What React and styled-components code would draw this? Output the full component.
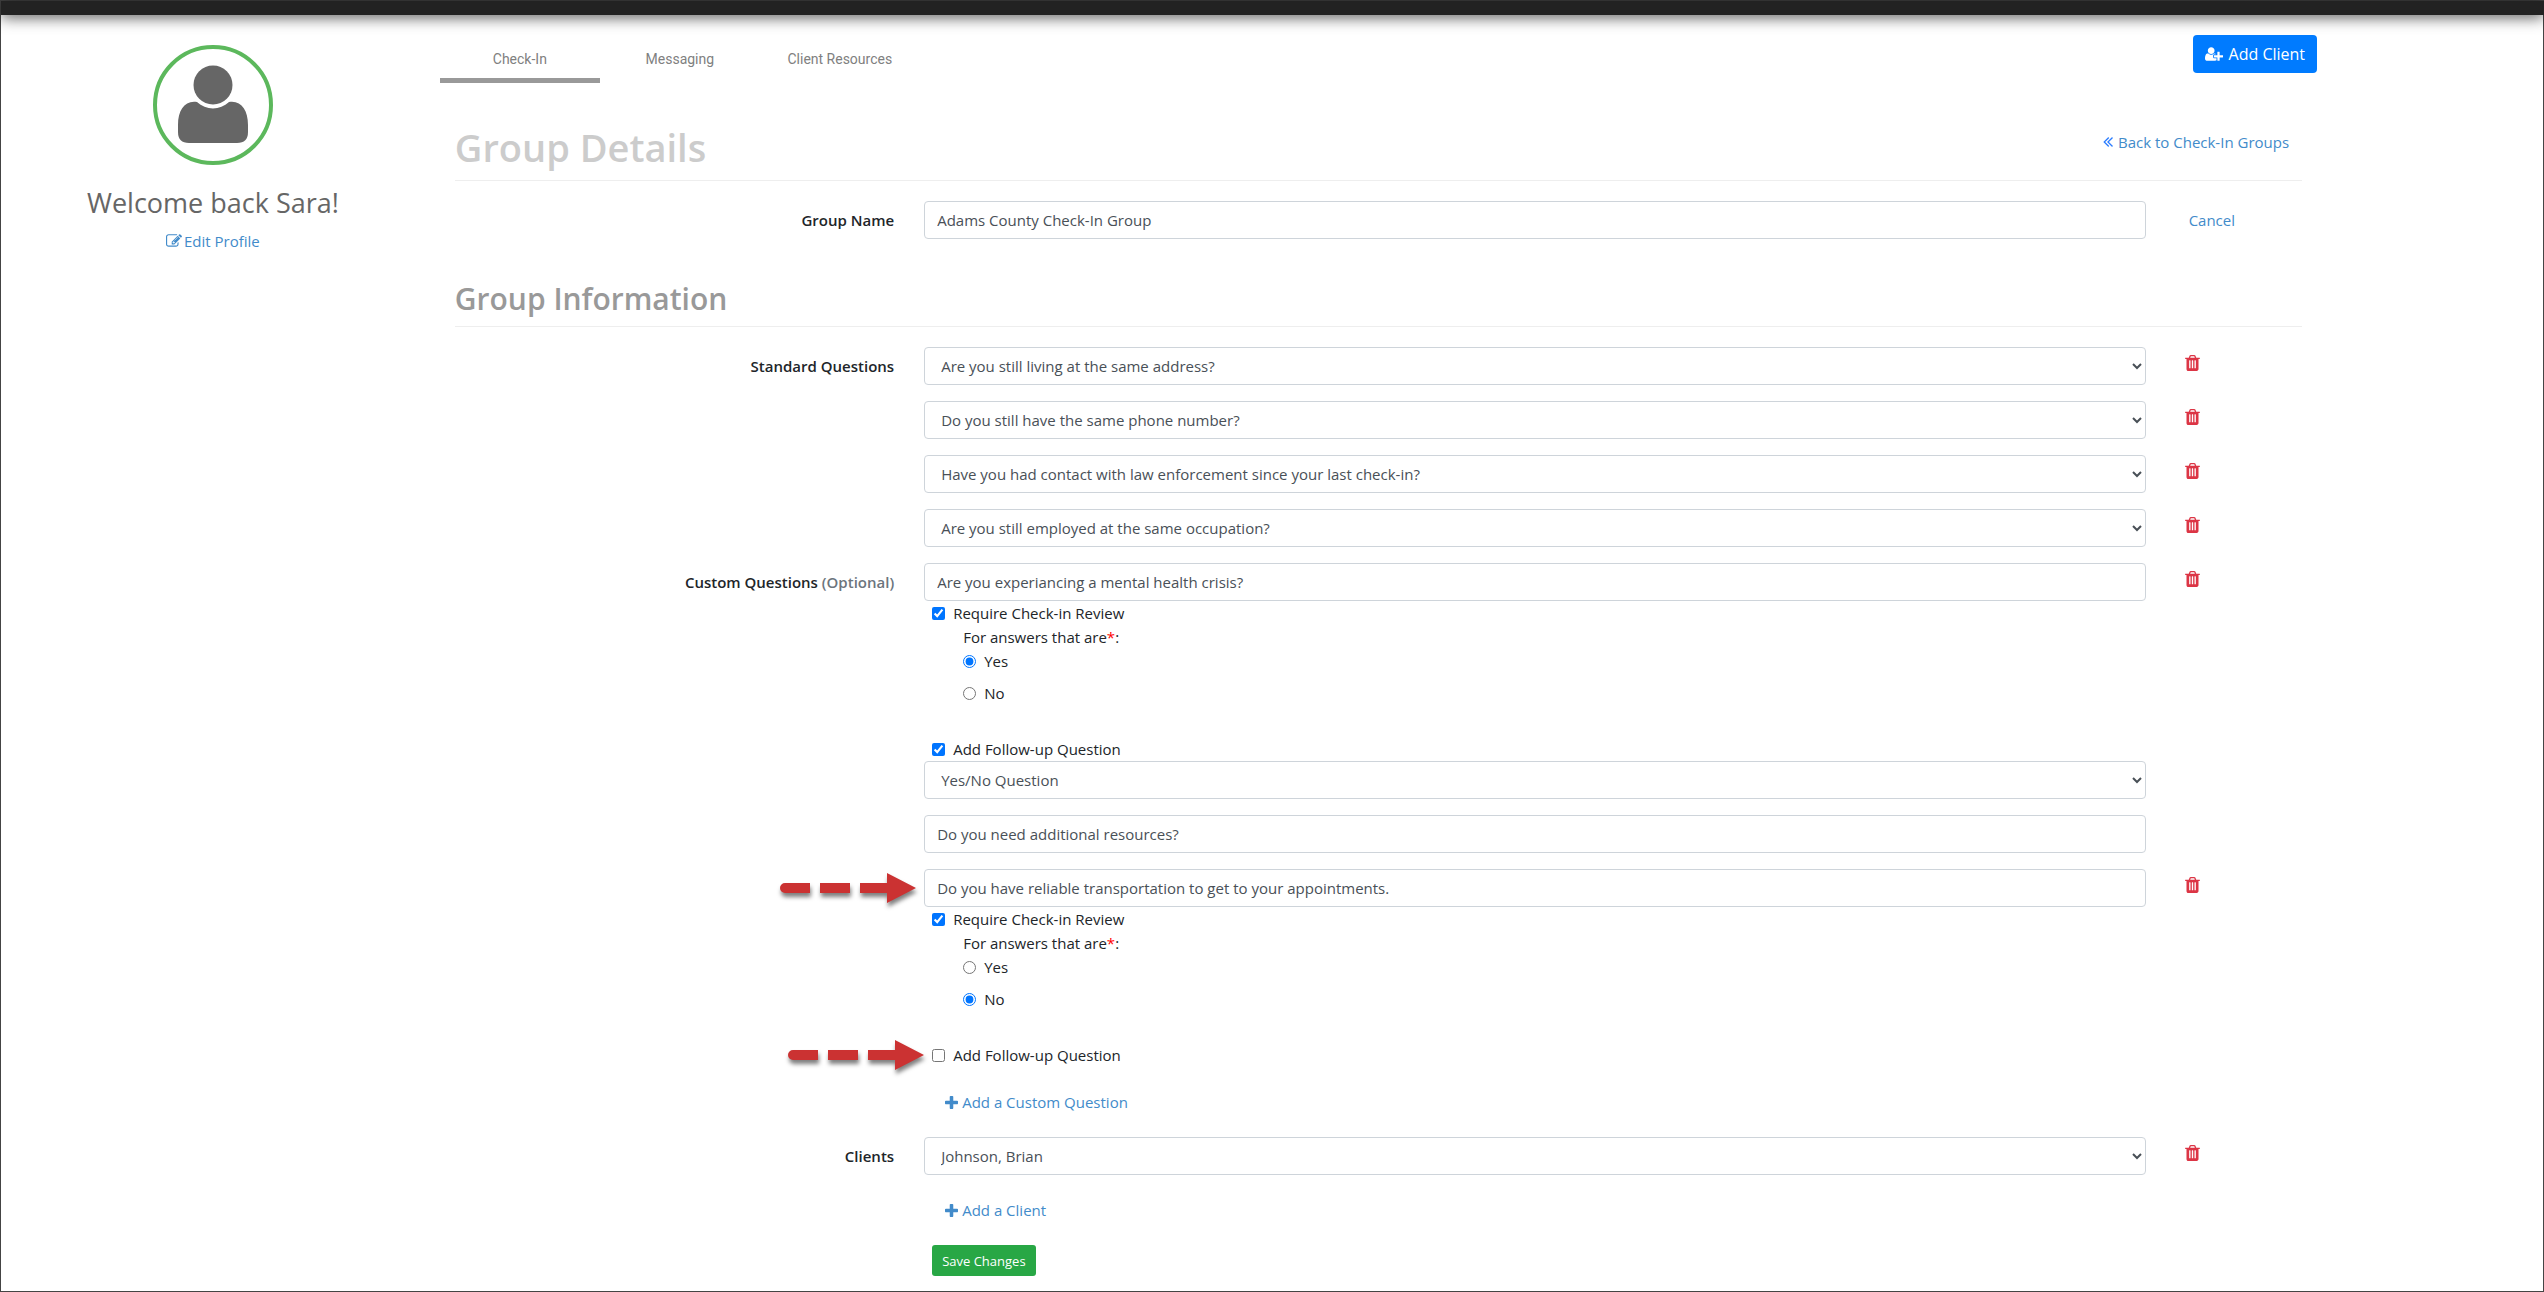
import React from 'react';
import styled, { createGlobalStyle } from 'styled-components';

const standardQuestions = [
  'Are you still living at the same address?',
  'Do you still have the same phone number?',
  'Have you had contact with law enforcement since your last check-in?',
  'Are you still employed at the same occupation?',
];

const customQuestions = [
  {
    id: 'crisis',
    text: 'Are you experiancing a mental health crisis?',
    reviewAnswer: 'Yes',
    followUp: 'Do you need additional resources?',
  },
  {
    id: 'transport',
    text: 'Do you have reliable transportation to get to your appointments.',
    reviewAnswer: 'No',
    marked: true,
  },
];

const icons = {
  edit: 'M888 1184l116-116-152-152-116 116v56h96v96h56zm440-720q-16-16-33 1l-350 350q-17 17-1 33t33-1l350-350q17-17 1-33zm80 594v190q0 119-84.5 203.5t-203.5 84.5h-832q-119 0-203.5-84.5t-84.5-203.5v-832q0-119 84.5-203.5t203.5-84.5h832q63 0 117 25 15 7 18 23 3 17-9 29l-49 49q-14 14-32 8-23-6-45-6h-832q-66 0-113 47t-47 113v832q0 66 47 113t113 47h832q66 0 113-47t47-113v-126q0-13 9-22l64-64q15-15 35-7t20 29zm-96-738l288 288-672 672h-288v-288zm444 132l-92 92-288-288 92-92q28-28 68-28t68 28l152 152q28 28 28 68t-28 68z',
  plus: 'M1600 736v192q0 40-28 68t-68 28h-416v416q0 40-28 68t-68 28h-192q-40 0-68-28t-28-68v-416h-416q-40 0-68-28t-28-68v-192q0-40 28-68t68-28h416v-416q0-40 28-68t68-28h192q40 0 68 28t28 68v416h416q40 0 68 28t28 68z',
  userPlus: 'M704 896q-159 0-271.5-112.5t-112.5-271.5 112.5-271.5 271.5-112.5 271.5 112.5 112.5 271.5-112.5 271.5-271.5 112.5zm960 128h352q13 0 22.5 9.5t9.5 22.5v192q0 13-9.5 22.5t-22.5 9.5h-352v352q0 13-9.5 22.5t-22.5 9.5h-192q-13 0-22.5-9.5t-9.5-22.5v-352h-352q-13 0-22.5-9.5t-9.5-22.5v-192q0-13 9.5-22.5t22.5-9.5h352v-352q0-13 9.5-22.5t22.5-9.5h192q13 0 22.5 9.5t9.5 22.5v352zm-736 224q0 52 38 90t90 38h256v238q-68 50-171 50h-874q-121 0-194-69t-73-190q0-53 3.5-103.5t14-109 26.5-108.5 43-97.5 62-81 85.5-53.5 111.5-20q19 0 39 17 79 61 154.5 91.5t164.5 30.5 164.5-30.5 154.5-91.5q20-17 39-17 132 0 217 96h-223q-52 0-90 38t-38 90v192z',
  back: 'M1011 1376q0 13-10 23l-50 50q-10 10-23 10t-23-10l-466-466q-10-10-10-23t10-23l466-466q10-10 23-10t23 10l50 50q10 10 10 23t-10 23l-393 393 393 393q10 10 10 23zm384 0q0 13-10 23l-50 50q-10 10-23 10t-23-10l-466-466q-10-10-10-23t10-23l466-466q10-10 23-10t23 10l50 50q10 10 10 23t-10 23l-393 393 393 393q10 10 10 23z',
  trash: 'M704 1376v-704q0-14-9-23t-23-9h-64q-14 0-23 9t-9 23v704q0 14 9 23t23 9h64q14 0 23-9t9-23zm256 0v-704q0-14-9-23t-23-9h-64q-14 0-23 9t-9 23v704q0 14 9 23t23 9h64q14 0 23-9t9-23zm256 0v-704q0-14-9-23t-23-9h-64q-14 0-23 9t-9 23v704q0 14 9 23t23 9h64q14 0 23-9t9-23zm-544-992h448l-48-117q-7-9-17-11h-317q-10 2-17 11zm928 32v64q0 14-9 23t-23 9h-96v948q0 83-47 143.5t-113 60.5h-832q-66 0-113-58.5t-47-141.5v-952h-96q-14 0-23-9t-9-23v-64q0-14 9-23t23-9h309l70-167q15-37 54-63t79-26h320q40 0 79 26t54 63l70 167h309q14 0 23 9t9 23z',
};

const Icon = ({ name, viewBox = '0 0 1792 1792', width = 16, height = 16, color = 'currentColor' }) => (
  <svg width={width} height={height} viewBox={viewBox} fill={color} aria-hidden="true">
    <path d={icons[name]} />
  </svg>
);

const DeleteButton = ({ label }) => (
  <TrashButton type="button" aria-label={label}>
    <Icon name="trash" viewBox="192 128 1408 1536" width={15} height={16} />
  </TrashButton>
);

const Arrow = () => (
  <ArrowSvg width="136" height="30" viewBox="0 0 136 30" aria-hidden="true">
    <path
      fill="#cb3232"
      d="M5 10H30V20H5A5 5 0 0 1 5 10ZM40 10H70V20H40ZM80 10H107V0L136 15L107 30V20H80Z"
    />
  </ArrowSvg>
);

const CustomQuestion = ({ question, label }) => (
  <FormRow>
    {label}
    <Field>
      <MarkedLine>
        {question.marked && <Arrow />}
        <TextInput aria-label="Custom question" defaultValue={question.text} />
      </MarkedLine>
      <CheckLine>
        <input type="checkbox" defaultChecked />
        Require Check-in Review
      </CheckLine>
      <Answers>
        <Legend>
          For answers that are<Required>*</Required>:
        </Legend>
        {['Yes', 'No'].map((answer) => (
          <RadioLine key={answer}>
            <input
              type="radio"
              name={`answer-${question.id}`}
              defaultChecked={question.reviewAnswer === answer}
            />
            {answer}
          </RadioLine>
        ))}
      </Answers>
      <CheckLine>
        {question.marked && <Arrow />}
        <input type="checkbox" defaultChecked={Boolean(question.followUp)} />
        Add Follow-up Question
      </CheckLine>
      {question.followUp && (
        <FollowUp>
          <Select aria-label="Follow-up type">
            <option>Yes/No Question</option>
          </Select>
          <TextInput aria-label="Follow-up question" defaultValue={question.followUp} />
        </FollowUp>
      )}
    </Field>
    <Action>
      <DeleteButton label="Remove custom question" />
    </Action>
  </FormRow>
);

const App = () => (
  <>
    <GlobalStyle />
    <Page>
      <TopBar />
      <Columns>
        <Sidebar>
          <Avatar width="120" height="120" viewBox="0 0 120 120" role="img" aria-label="Profile">
            <circle cx="60" cy="60" r="58" fill="none" stroke="#5cb85c" strokeWidth="4" />
            <circle cx="60" cy="40" r="19.5" fill="#666" />
            <path
              fill="#666"
              d="M44 57C53 65.500 67 65.500 76 57C88 55 95 65 95 80V87Q95 98 84 98H36Q25 98 25 87V80C25 65 32 55 44 57Z"
            />
          </Avatar>
          <Welcome>Welcome back Sara!</Welcome>
          <EditLink href="#profile">
            <Icon name="edit" />
            Edit Profile
          </EditLink>
        </Sidebar>
        <Main>
          <Header>
            <Tabs>
              <Tab href="#check-in" $active>Check-In</Tab>
              <Tab href="#messaging">Messaging</Tab>
              <Tab href="#resources">Client Resources</Tab>
            </Tabs>
            <AddClient type="button">
              <Icon name="userPlus" viewBox="0 0 2048 1792" width={18} />
              Add Client
            </AddClient>
          </Header>

          <TitleBar>
            <PageTitle>Group Details</PageTitle>
            <BackLink href="#groups">
              <Icon name="back" viewBox="384 448 1024 1024" width={10} height={10} color="#2a7cff" />
              Back to Check-In Groups
            </BackLink>
          </TitleBar>
          <FormRow>
            <Label htmlFor="group-name">Group Name</Label>
            <Field>
              <TextInput id="group-name" defaultValue="Adams County Check-In Group" />
            </Field>
            <Action>
              <CancelLink href="#cancel">Cancel</CancelLink>
            </Action>
          </FormRow>

          <SectionBar>
            <SectionTitle>Group Information</SectionTitle>
          </SectionBar>
          {standardQuestions.map((question, i) => (
            <FormRow key={question}>
              {i === 0 ? <Label htmlFor="standard-0">Standard Questions</Label> : <span />}
              <Field>
                <Select id={`standard-${i}`} aria-label="Standard question">
                  <option>{question}</option>
                </Select>
              </Field>
              <Action>
                <DeleteButton label="Remove standard question" />
              </Action>
            </FormRow>
          ))}
          {customQuestions.map((question, i) => (
            <CustomQuestion
              key={question.id}
              question={question}
              label={i === 0 ? (
                <Label as="span">
                  Custom Questions <Muted>(Optional)</Muted>
                </Label>
              ) : <span />}
            />
          ))}
          <LinkRow>
            <AddLink href="#add-question">
              <Icon name="plus" viewBox="192 128 1408 1408" width={13} height={13} />
              Add a Custom Question
            </AddLink>
          </LinkRow>
          <FormRow>
            <Label htmlFor="clients">Clients</Label>
            <Field>
              <Select id="clients">
                <option>Johnson, Brian</option>
              </Select>
            </Field>
            <Action>
              <DeleteButton label="Remove client" />
            </Action>
          </FormRow>
          <LinkRow>
            <AddLink href="#add-client">
              <Icon name="plus" viewBox="192 128 1408 1408" width={13} height={13} />
              Add a Client
            </AddLink>
          </LinkRow>
          <LinkRow>
            <SaveButton type="submit">Save Changes</SaveButton>
          </LinkRow>
        </Main>
      </Columns>
    </Page>
  </>
);

export default App;

const GlobalStyle = createGlobalStyle`
  * {
    box-sizing: border-box;
  }

  body {
    margin: 0;
    background: #fff;
    color: #212529;
    font-family: "Segoe UI", "Open Sans", sans-serif;
    font-size: 15px;
    line-height: 24px;
  }

  a {
    color: #428bca;
    text-decoration: none;
  }

  input,
  select,
  button {
    margin: 0;
    font: inherit;
  }
`;

const Page = styled.div`
  min-height: 100vh;
  border: 1px solid #444;
  border-right: 0;
  box-shadow: inset -1px 0 #444;
`;

const TopBar = styled.div`
  height: 14px;
  background: #222;
  box-shadow: 0 2px 15px rgba(0, 0, 0, 0.7);
`;

const Columns = styled.div`
  display: grid;
  grid-template-columns: 2fr 9fr 1fr;
`;

const Sidebar = styled.aside`
  display: flex;
  flex-direction: column;
  align-items: center;
  padding-top: 30px;
`;

const Avatar = styled.svg`
  display: block;
`;

const Welcome = styled.h3`
  margin: 20px 0 8px;
  color: #666;
  font-size: 27px;
  font-weight: 400;
  line-height: 36px;
`;

const EditLink = styled.a`
  display: flex;
  align-items: center;
  gap: 2px;
`;

const Main = styled.main`
  min-width: 0;
  padding: 20px 15px 14px;
`;

const Header = styled.div`
  display: flex;
  justify-content: space-between;
  align-items: flex-start;
`;

const Tabs = styled.nav`
  display: flex;
`;

const Tab = styled.a`
  width: 160px;
  padding: 15px 0 9px;
  border-bottom: 5px solid ${({ $active }) => ($active ? '#999' : 'transparent')};
  color: #808080;
  font-family: Roboto, sans-serif;
  font-size: 14px;
  line-height: 19px;
  text-align: center;
`;

const AddClient = styled.button`
  display: flex;
  align-items: center;
  gap: 6px;
  height: 38px;
  padding: 0 12px;
  border: 0;
  border-radius: 4px;
  background: #007bff;
  color: #fff;
  font-size: 16px;
`;

const TitleBar = styled.div`
  display: flex;
  justify-content: space-between;
  align-items: flex-start;
  margin: 40px 15px 20px;
  padding-bottom: 9px;
  border-bottom: 1px solid #eee;
`;

const PageTitle = styled.h1`
  margin: 0;
  color: #ccc;
  font-size: 38px;
  font-weight: 600;
  line-height: 48px;
`;

const BackLink = styled.a`
  display: flex;
  align-items: center;
  gap: 5px;
  padding: 7px 13px;
`;

const SectionBar = styled.div`
  margin: 40px 15px 20px;
  padding-bottom: 7px;
  border-bottom: 1px solid #eee;
`;

const SectionTitle = styled.h2`
  margin: 0;
  color: #999;
  font-size: 30px;
  font-weight: 600;
  line-height: 40px;
`;

const FormRow = styled.div`
  display: grid;
  grid-template-columns: 3fr 8fr 1fr;
  margin-bottom: 16px;
`;

const Label = styled.label`
  padding: 7px 15px;
  font-weight: 600;
  text-align: right;
`;

const Muted = styled.span`
  color: #6c757d;
`;

const Field = styled.div`
  min-width: 0;
  padding: 0 15px;
`;

const Action = styled.div`
  padding-left: 15px;
`;

const MarkedLine = styled.div`
  position: relative;
`;

const TextInput = styled.input`
  display: block;
  width: 100%;
  height: 38px;
  padding: 6px 12px;
  border: 1px solid #ced4da;
  border-radius: 4px;
  background: #fff;
  color: #495057;
`;

const Select = styled.select`
  display: block;
  width: 100%;
  height: 38px;
  padding: 6px 12px;
  border: 1px solid #ced4da;
  border-radius: 4px;
  background: #fff;
  color: #495057;
`;

const CheckLine = styled.label`
  position: relative;
  display: flex;
  align-items: center;
  gap: 8px;
  width: max-content;
  margin-left: 8px;
`;

const Answers = styled.div`
  padding: 0 0 32px 39px;
`;

const Legend = styled.div`
  line-height: 24px;
`;

const Required = styled.span`
  color: #f00;
`;

const RadioLine = styled.label`
  display: flex;
  align-items: center;
  gap: 8px;
  width: max-content;

  & + & {
    margin-top: 8px;
  }
`;

const FollowUp = styled.div`
  display: grid;
  gap: 16px;
`;

const ArrowSvg = styled.svg`
  position: absolute;
  top: 50%;
  right: calc(100% + 8px);
  overflow: visible;
  transform: translateY(-50%);
  filter: drop-shadow(1px 4px 2px rgba(0, 0, 0, 0.5));
`;

const TrashButton = styled.button`
  display: flex;
  padding: 8px 9px;
  border: 0;
  background: none;
  color: #dc3545;
  cursor: pointer;
`;

const CancelLink = styled.a`
  display: inline-block;
  padding: 7px 13px;
`;

const LinkRow = styled.div`
  display: flex;
  margin-bottom: 16px;
  padding-left: calc(25% + 23px);

  &:last-child {
    margin-bottom: 0;
  }
`;

const AddLink = styled.a`
  display: flex;
  align-items: center;
  gap: 4px;
  padding: 7px 13px;
`;

const SaveButton = styled.button`
  height: 31px;
  padding: 0 10px;
  border: 0;
  border-radius: 3px;
  background: #28a745;
  color: #fff;
  font-size: 13px;
`;
